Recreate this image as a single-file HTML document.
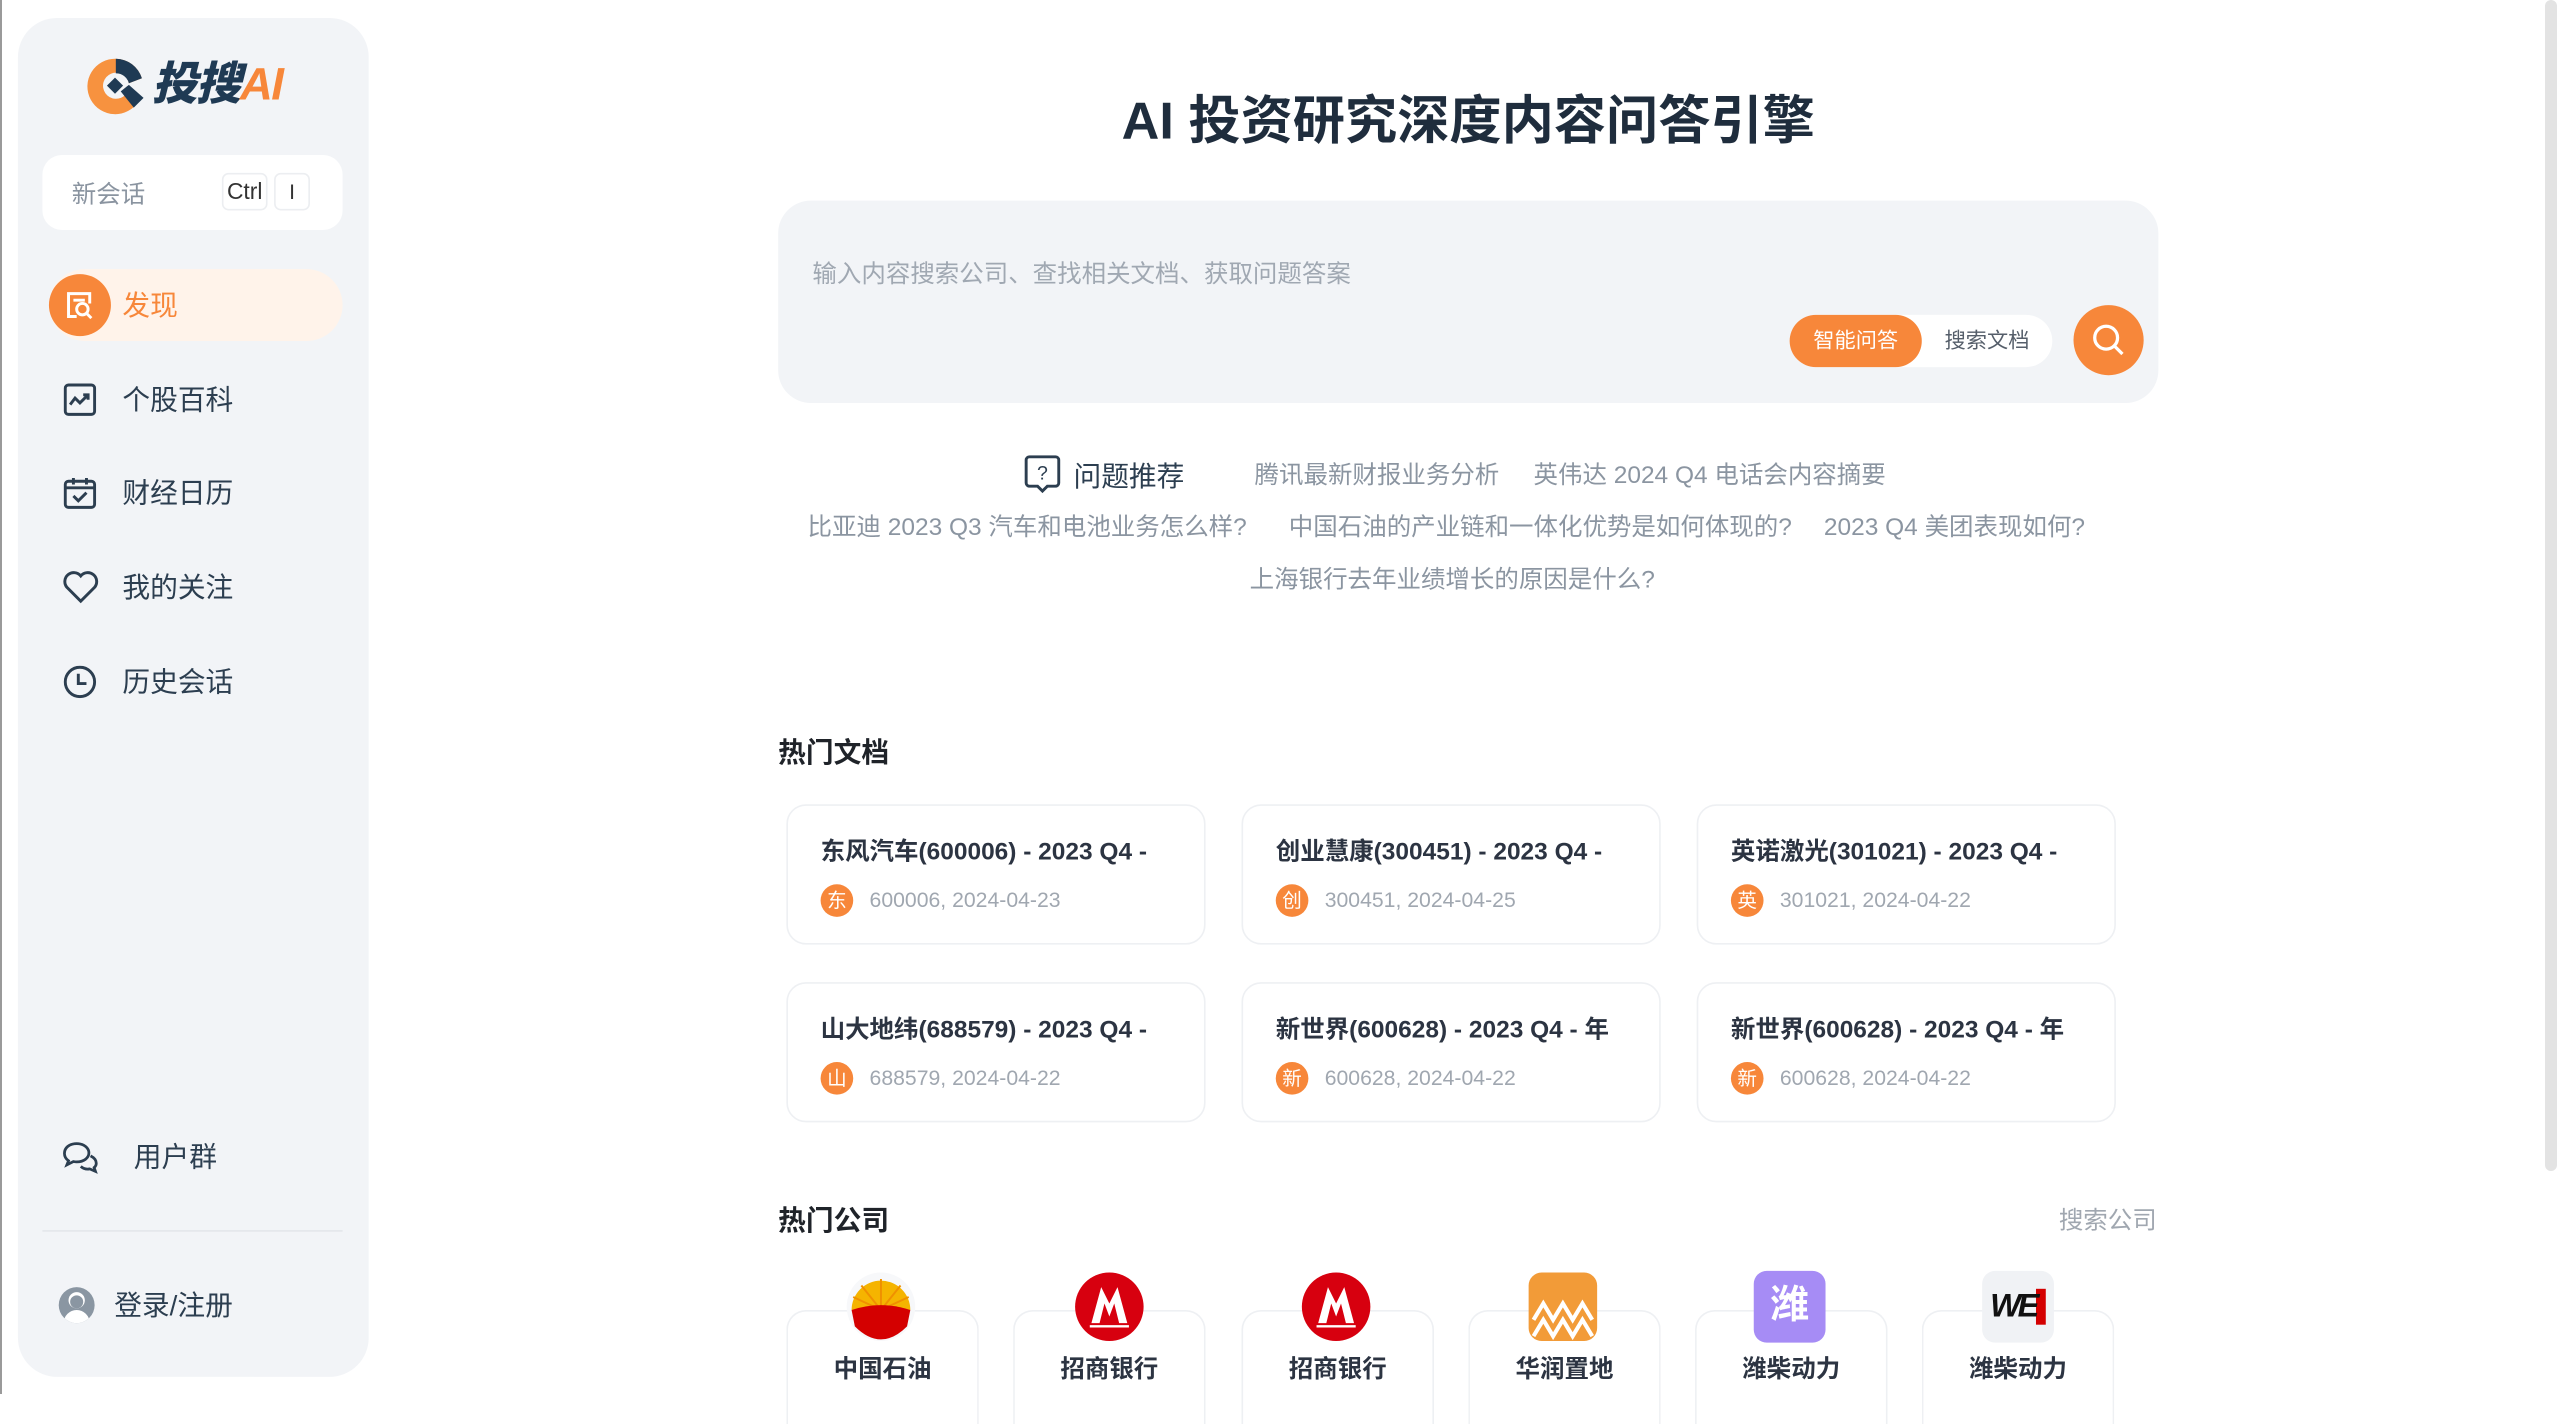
<!DOCTYPE html>
<html><head><meta charset="utf-8">
<style>
html,body{margin:0;padding:0;background:#fff;overflow:hidden;width:2558px;height:1394px}
*{box-sizing:border-box}
#w{position:absolute;left:0;top:0;width:1568px;height:855px;transform:scale(1.6314);transform-origin:0 0;font-family:"Liberation Sans","Noto Sans CJK SC",sans-serif;color:#2c3e50}
.a{position:absolute}
.side{left:11px;top:11px;width:215px;height:833px;background:#f2f4f7;border-radius:24px}
.nav{left:75px;font-size:17px;color:#2c3e50;line-height:20px}
.ic{position:absolute}
.rec{font-size:15px;color:#8b95a1;white-space:nowrap}
.card{width:257px;height:86px;border:1px solid #eef0f3;border-radius:12px;background:#fff}
.card .t{position:absolute;left:20px;top:17px;font-size:15px;font-weight:bold;color:#2c3442;white-space:nowrap}
.card .b{position:absolute;left:20px;top:48px;width:20px;height:20px;border-radius:50%;background:#f7873a;color:#fff;font-size:12px;text-align:center;line-height:20px}
.card .m{position:absolute;left:50px;top:50px;font-size:13px;color:#a0a7b0;white-space:nowrap}
.cc{width:118px;height:70px;top:803px;border:1px solid #eef0f3;border-bottom:none;border-radius:12px 12px 0 0;background:#fff}
.cn{position:absolute;top:828px;font-size:15px;font-weight:bold;color:#2c3442;width:118px;text-align:center}
.lg{position:absolute;top:779px;width:44px;height:44px}
</style></head><body>
<div style="position:absolute;left:0;top:0;width:2px;height:1394px;background:#9a9a9a"></div>
<div style="position:absolute;left:2545px;top:0;width:12px;height:1171px;background:#e3e3e3;border-radius:6px"></div>
<div id="w">
<div class="a side"></div>
<svg class="a" style="left:52px;top:34px" width="38" height="38" viewBox="0 0 38 38">
<path d="M19 2 A17 17 0 1 0 33 28 L25 24 A8 8 0 1 1 27 17 L35 14 A17 17 0 0 0 19 2Z" fill="#f7923f"/>
<path d="M19 2 A17 17 0 0 1 35 14 L27 17 A8 8 0 0 0 19 11Z" fill="#1f3a54"/>
<path d="M22 22 L30 32 L36 26 L27 18Z" fill="#1f3a54"/>
<rect x="15" y="15" width="7" height="7" transform="rotate(45 18.5 18.5)" fill="#1f3a54"/>
</svg>
<div class="a" style="left:93px;top:34px;font-size:28px;font-weight:900;font-style:italic;color:#1f3a54;letter-spacing:-1px;line-height:36px">投搜<span style="color:#f7873a;font-family:'Liberation Sans',sans-serif;font-weight:bold">AI</span></div>
<div class="a" style="left:26px;top:95px;width:184px;height:46px;background:#fff;border-radius:12px"></div>
<div class="a" style="left:44px;top:108px;font-size:15px;color:#8a94a0">新会话</div>
<div class="a" style="left:136px;top:106px;width:28px;height:23px;border:1px solid #eceef1;border-radius:4px;font-size:14px;color:#333;text-align:center;line-height:21px">Ctrl</div>
<div class="a" style="left:168px;top:106px;width:22px;height:23px;border:1px solid #eceef1;border-radius:4px;font-size:13px;color:#333;text-align:center;line-height:21px">I</div>
<div class="a" style="left:30px;top:165px;width:180px;height:44px;background:#fff3ea;border-radius:22px"></div>
<div class="a" style="left:30px;top:168px;width:38px;height:38px;border-radius:50%;background:#f7873a"></div>
<svg class="a" style="left:38px;top:176px" width="22" height="22" viewBox="0 0 22 22" fill="none" stroke="#fff" stroke-width="1.8"><path d="M9 18H4V4h13v6"/><circle cx="12.5" cy="13.5" r="3.5"/><path d="M15 16l3 3"/><path d="M7 8h7"/></svg>
<div class="a nav" style="top:178px;color:#f7873a">发现</div>
<svg class="a" style="left:39px;top:235px" width="20" height="20" viewBox="0 0 20 20" fill="none" stroke="#2c3e50" stroke-width="1.8"><rect x="1" y="1" width="18" height="18" rx="2"/><path d="M4 13l3-4 3 3 5-5M12 7h3v3"/></svg>
<div class="a nav" style="top:236px">个股百科</div>
<svg class="a" style="left:39px;top:292px" width="20" height="20" viewBox="0 0 20 20" fill="none" stroke="#2c3e50" stroke-width="1.8"><rect x="1" y="3" width="18" height="16" rx="2"/><path d="M1 7h18M6 1v4M14 1v4M6 12l3 3 5-5"/></svg>
<div class="a nav" style="top:293px">财经日历</div>
<svg class="a" style="left:38px;top:350px" width="23" height="20" viewBox="0 0 23 20" fill="none" stroke="#2c3e50" stroke-width="1.8"><path d="M11.5 18.5 L3 10 A5 5 0 0 1 11.5 3 A5 5 0 0 1 20 10Z"/></svg>
<div class="a nav" style="top:351px">我的关注</div>
<svg class="a" style="left:39px;top:408px" width="20" height="20" viewBox="0 0 20 20" fill="none" stroke="#2c3e50" stroke-width="1.8"><circle cx="10" cy="10" r="9"/><path d="M9 5v6h5"/></svg>
<div class="a nav" style="top:409px">历史会话</div>
<svg class="a" style="left:38px;top:699px" width="23" height="21" viewBox="0 0 23 21" fill="none" stroke="#2c3e50" stroke-width="1.7"><path d="M9 2C4.5 2 1.5 4.5 1.5 8c0 2 1 3.5 2.5 4.5L3 15l4-2c.6.1 1.3.2 2 .2 4.5 0 7.5-2.5 7.5-5.5S13.5 2 9 2z"/><path d="M17.5 9.5c2 1 3.5 2.5 3.5 4.5 0 1-.5 2-1.3 2.7L20.5 19l-3.5-1.5c-2 .4-4-.2-5.5-1.5"/></svg>
<div class="a nav" style="left:82px;top:700px">用户群</div>
<div class="a" style="left:26px;top:754px;width:184px;height:1px;background:#e4e7eb"></div>
<div class="a" style="left:36px;top:789px;width:22px;height:22px;border-radius:50%;background:#8a96a2;overflow:hidden"><div class="a" style="left:6px;top:3px;width:10px;height:10px;border-radius:50%;background:#fff"></div><div class="a" style="left:3px;top:14px;width:16px;height:12px;border-radius:8px 8px 0 0;background:#fff"></div><div class="a" style="left:7px;top:5px;width:8px;height:8px;border-radius:50%;background:#8a96a2"></div></div>
<div class="a nav" style="left:70px;top:791px">登录/注册</div>

<div class="a" style="left:600px;width:600px;top:53px;text-align:center;font-size:32px;font-weight:bold;color:#1f2d3d;line-height:42px">AI 投资研究深度内容问答引擎</div>
<div class="a" style="left:477px;top:123px;width:846px;height:124px;background:#f2f4f7;border-radius:20px"></div>
<div class="a" style="left:498px;top:157px;font-size:15px;color:#a0a8b2">输入内容搜索公司、查找相关文档、获取问题答案</div>
<div class="a" style="left:1097px;top:193px;width:161px;height:32px;background:#fff;border-radius:16px"></div>
<div class="a" style="left:1097px;top:193px;width:81px;height:32px;background:#f7873a;border-radius:16px;color:#fff;font-size:13px;text-align:center;line-height:32px">智能问答</div>
<div class="a" style="left:1178px;top:193px;width:80px;height:32px;color:#555e6a;font-size:13px;text-align:center;line-height:32px">搜索文档</div>
<div class="a" style="left:1271px;top:187px;width:43px;height:43px;border-radius:50%;background:#f7873a"></div>
<svg class="a" style="left:1282px;top:198px" width="21" height="21" viewBox="0 0 21 21" fill="none" stroke="#fff" stroke-width="2"><circle cx="9" cy="9" r="7"/><path d="M14 14l5 5"/></svg>

<svg class="a" style="left:628px;top:279px" width="22" height="24" viewBox="0 0 22 24" fill="none" stroke="#2c3e50" stroke-width="1.8"><path d="M3 1h16a2 2 0 0 1 2 2v14a2 2 0 0 1-2 2h-5l-3 3-3-3H3a2 2 0 0 1-2-2V3a2 2 0 0 1 2-2z"/><text x="11" y="15" font-size="12" text-anchor="middle" fill="#2c3e50" stroke="none" font-family="Liberation Sans">?</text></svg>
<div class="a" style="left:658px;top:278px;font-size:17px;color:#2c3e50">问题推荐</div>
<div class="a rec" style="left:769px;top:280px">腾讯最新财报业务分析</div>
<div class="a rec" style="left:940px;top:280px">英伟达 2024 Q4 电话会内容摘要</div>
<div class="a rec" style="left:495px;top:312px">比亚迪 2023 Q3 汽车和电池业务怎么样?</div>
<div class="a rec" style="left:790px;top:312px">中国石油的产业链和一体化优势是如何体现的?</div>
<div class="a rec" style="left:1118px;top:312px">2023 Q4 美团表现如何?</div>
<div class="a rec" style="left:766px;top:344px">上海银行去年业绩增长的原因是什么?</div>

<div class="a" style="left:477px;top:447px;font-size:17px;font-weight:bold;color:#1f2329">热门文档</div>
<div class="a card" style="left:482px;top:493px"><div class="t">东风汽车(600006) - 2023 Q4 -</div><div class="b">东</div><div class="m">600006, 2024-04-23</div></div>
<div class="a card" style="left:761px;top:493px"><div class="t">创业慧康(300451) - 2023 Q4 -</div><div class="b">创</div><div class="m">300451, 2024-04-25</div></div>
<div class="a card" style="left:1040px;top:493px"><div class="t">英诺激光(301021) - 2023 Q4 -</div><div class="b">英</div><div class="m">301021, 2024-04-22</div></div>
<div class="a card" style="left:482px;top:602px"><div class="t">山大地纬(688579) - 2023 Q4 -</div><div class="b">山</div><div class="m">688579, 2024-04-22</div></div>
<div class="a card" style="left:761px;top:602px"><div class="t">新世界(600628) - 2023 Q4 - 年</div><div class="b">新</div><div class="m">600628, 2024-04-22</div></div>
<div class="a card" style="left:1040px;top:602px"><div class="t">新世界(600628) - 2023 Q4 - 年</div><div class="b">新</div><div class="m">600628, 2024-04-22</div></div>

<div class="a" style="left:477px;top:734px;font-size:17px;font-weight:bold;color:#1f2329">热门公司</div>
<div class="a" style="left:1262px;top:737px;font-size:15px;color:#a0a7b0">搜索公司</div>

<div class="a cc" style="left:482px"></div><div class="a cc" style="left:621px"></div><div class="a cc" style="left:761px"></div><div class="a cc" style="left:900px"></div><div class="a cc" style="left:1039px"></div><div class="a cc" style="left:1178px"></div>
<svg class="lg" style="left:518px" viewBox="0 0 44 44"><circle cx="22" cy="22" r="21" fill="#f7f8fa"/><path d="M4 24 A18 18 0 0 1 40 24Z" fill="#f5b400"/><g stroke="#f09000" stroke-width="1.2"><path d="M22 24L22 5M22 24L10 9M22 24L34 9M22 24L5 16M22 24L39 16"/></g><path d="M4 24 Q22 18 40 24 L38 34 Q30 42 22 42 Q14 42 6 34Z" fill="#d40000"/></svg>
<svg class="lg" style="left:658px" viewBox="0 0 44 44"><circle cx="22" cy="22" r="21" fill="#d7000f"/><path d="M11 32 L17 10 L22 20 L27 10 L33 32 L28 32 L25 20 L22 28 L19 20 L16 32Z" fill="#fff"/><path d="M10 34h24" stroke="#fff" stroke-width="1.5"/></svg>
<svg class="lg" style="left:797px" viewBox="0 0 44 44"><circle cx="22" cy="22" r="21" fill="#d7000f"/><path d="M11 32 L17 10 L22 20 L27 10 L33 32 L28 32 L25 20 L22 28 L19 20 L16 32Z" fill="#fff"/><path d="M10 34h24" stroke="#fff" stroke-width="1.5"/></svg>
<svg class="lg" style="left:936px" viewBox="0 0 44 44"><rect x="1" y="1" width="42" height="42" rx="8" fill="#f29b38"/><path d="M4 30 L10 20 L16 30 L22 20 L28 30 L34 20 L40 30 M4 40 L10 30 L16 40 L22 30 L28 40 L34 30 L40 40" stroke="#fff" stroke-width="2.5" fill="none"/></svg>
<div class="lg" style="left:1075px;background:#a68cf5;border-radius:8px;color:#fff;font-size:24px;font-weight:bold;text-align:center;line-height:44px">潍</div>
<div class="lg" style="left:1215px;background:#f0f2f5;border-radius:8px;color:#111;font-size:20px;font-weight:900;font-style:italic;text-align:center;line-height:44px;letter-spacing:-2px">W<span style="color:#111;border-right:6px solid #d40000">E</span></div>

<div class="cn" style="left:482px">中国石油</div><div class="cn" style="left:621px">招商银行</div><div class="cn" style="left:761px">招商银行</div><div class="cn" style="left:900px">华润置地</div><div class="cn" style="left:1039px">潍柴动力</div><div class="cn" style="left:1178px">潍柴动力</div>
</div>
</body></html>
